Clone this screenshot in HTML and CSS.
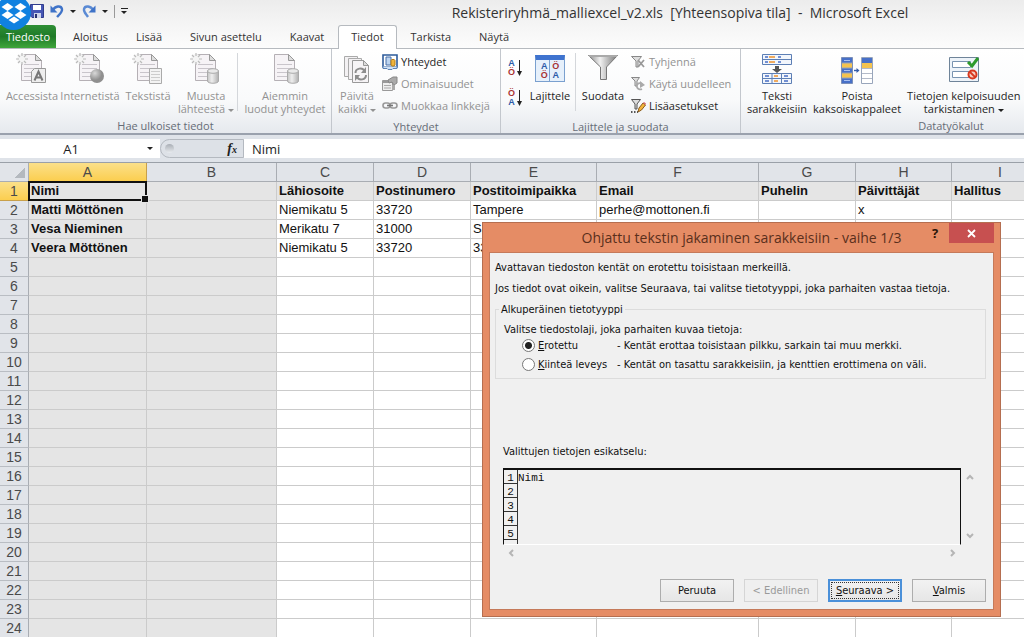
FILE: index.html
```html
<!DOCTYPE html>
<html lang="fi">
<head>
<meta charset="utf-8">
<title>Rekisteriryhmä_malliexcel_v2.xls - Microsoft Excel</title>
<link rel="stylesheet" href="styles.css">
</head>
<body>
<svg class="defs" aria-hidden="true">
  <defs>
    <linearGradient id="metal" x1="0" x2="1"><stop offset="0" stop-color="#8b8b8b"/><stop offset=".4" stop-color="#f0f0f0"/><stop offset="1" stop-color="#777"/></linearGradient>
    <linearGradient id="drum" x1="0" x2="1"><stop offset="0" stop-color="#c4c4c4"/><stop offset=".4" stop-color="#eee"/><stop offset="1" stop-color="#b0b0b0"/></linearGradient>
    <radialGradient id="ball" cx=".35" cy=".3"><stop offset="0" stop-color="#d8d8d8"/><stop offset="1" stop-color="#8f8f8f"/></radialGradient>
  </defs>
  <symbol id="doc" viewBox="0 0 32 32">
    <path d="M5.500 1.500h14l6 6v20h-20z" fill="#f6f3f6" stroke="#b5b0b5"/>
    <path d="M19.500 1.500v6h6z" fill="#ddd" stroke="#999"/>
    <path d="M8 11.500h15M8 15.500h15M8 19.500h15M8 23.500h15" stroke="#c9c5cb"/>
  </symbol>
  <symbol id="spark" viewBox="0 0 32 32">
    <circle cx="6" cy="6" r="5" fill="#f4f4f4"/>
    <path d="M6 0v3M6 9v3M0 6h3M9 6h3M2 2l2 2M8 8l2 2M10 2L8 4M4 8l-2 2" stroke="#bbb" stroke-width="1.200"/>
  </symbol>
  <symbol id="cylinder" viewBox="0 0 12 16">
    <path d="M.5 3v10c0 3 11 3 11 0V3z" fill="url(#drum)" stroke="#aaa"/>
    <ellipse cx="6" cy="3" rx="5.500" ry="2.300" fill="#e9e9e9" stroke="#aaa"/>
  </symbol>
  <symbol id="funnel" viewBox="0 0 32 32">
    <path d="M1.500 2.500h29L19.500 14v12.500h-6V14z" fill="url(#metal)" stroke="#777"/>
    <path d="M2 3h28" stroke="#aaa" stroke-width="2"/>
  </symbol>
</svg>

<div class="window">
  <header class="titlebar">
    <div class="quick">
      <button class="tool" aria-label="Tallenna"><svg width="14" height="14" viewBox="0 0 14 14"><path d="M.5.5h13v13H2L.5 12z" fill="#4656b4" stroke="#313c8c"/><path d="M3 1h8v5H3z" fill="#fff"/><path d="M4 9h7v5H4z" fill="#cfd5ea"/><path d="M5 10h2v4H5z" fill="#27306f"/></svg></button>
      <button class="tool" aria-label="Kumoa"><svg width="14" height="14" viewBox="0 0 14 14"><path d="M3 6c2-4 8-5 9-1 .6 3-2 5-5 8" fill="none" stroke="#3f73c8" stroke-width="2.400"/><path d="M.5 1.500v7h7z" fill="#3f73c8"/></svg></button>
      <span class="drop"></span>
      <button class="tool" aria-label="Tee uudelleen"><svg width="14" height="14" viewBox="0 0 14 14"><path d="M11 6c-2-4-8-5-9-1-.6 3 2 5 4 8" fill="none" stroke="#5a8ad4" stroke-width="2.400"/><path d="M13.500 1.500v7h-7z" fill="#3f73c8"/></svg></button>
      <span class="drop"></span>
      <span class="rule"></span>
      <span class="more"></span>
    </div>
    <h1 class="caption">Rekisteriryhmä_malliexcel_v2.xls &nbsp;[Yhteensopiva tila] &nbsp;- &nbsp;Microsoft Excel</h1>
  </header>
  <div class="dropbox"><svg width="26" height="22" viewBox="0 0 26 22"><path d="M6.500 1l6 4-6 4-6-4zM19.500 1l6 4-6 4-6-4zM6.500 9l6 4-6 4-6-4zM19.500 9l6 4-6 4-6-4zM13 14.500l5.500 3.500-5.500 3.500L7.500 18z" fill="#fff"/></svg></div>

  <nav class="tabs">
    <button class="tab file">Tiedosto</button>
    <button class="tab">Aloitus</button>
    <button class="tab">Lisää</button>
    <button class="tab">Sivun asettelu</button>
    <button class="tab">Kaavat</button>
    <button class="tab active">Tiedot</button>
    <button class="tab">Tarkista</button>
    <button class="tab">Näytä</button>
  </nav>

  <section class="ribbon">
    <div class="group import">
      <div class="tools">
        <button class="big off"><svg width="32" height="32"><use href="#doc"/><use href="#spark"/><path d="M15.500 18.500l3-3h11v14h-14z" fill="#eee" stroke="#999"/><path d="M18.500 27.500l4-9 4 9M20 24.500h5" fill="none" stroke="#777" stroke-width="2"/></svg><span>Accessista</span></button>
        <button class="big off"><svg width="32" height="32"><use href="#doc"/><use href="#spark"/><circle cx="23" cy="23" r="7" fill="url(#ball)"/></svg><span>Internetistä</span></button>
        <button class="big off"><svg width="32" height="32"><use href="#doc"/><use href="#spark"/><path d="M17.500 15.500h12v15h-12z" fill="#f3f3f3" stroke="#aaa"/><path d="M19 18.500h9M19 21.500h9M19 24.500h9M19 27.500h9" stroke="#ccc"/></svg><span>Tekstistä</span></button>
        <button class="big off"><svg width="32" height="32"><use href="#doc"/><use href="#spark"/><use href="#cylinder" x="17" y="15" width="12" height="16"/></svg><span>Muusta<br>lähteestä <i class="caret"></i></span></button>
        <span class="divider"></span>
        <button class="big off"><svg width="32" height="32"><use href="#doc"/><use href="#cylinder" x="18" y="15" width="12" height="16"/></svg><span>Aiemmin<br>luodut yhteydet</span></button>
      </div>
      <h2 class="name">Hae ulkoiset tiedot</h2>
    </div>

    <div class="group links">
      <div class="tools">
        <button class="big off"><svg width="32" height="32"><path d="M3.500 3.500h13v20h-13z" fill="#f3f1f3" stroke="#aaa"/><path d="M7.500 5.500h13v21h-13z" fill="#f3f1f3" stroke="#aaa"/><path d="M11.500 7.500h11l5 5v17h-16z" fill="#f6f4f6" stroke="#999"/><path d="M22.500 7.500v5h5z" fill="#ddd" stroke="#999"/><path d="M14.500 20c0-5 7-6 9-2M25 22c0 5-7 6-9 2" fill="none" stroke="#8d8d8d" stroke-width="2"/><path d="M25 14v6h-5zM14 28v-6h5z" fill="#8d8d8d"/></svg><span>Päivitä<br>kaikki <i class="caret"></i></span></button>
        <div class="stack">
          <button class="small"><svg width="16" height="16" viewBox="0 0 16 16"><path d="M1 1h14v12H1z" fill="#fff" stroke="#2d5b9a" stroke-width="1.600"/><path d="M1 12.500v2h4l1 1h4l1-1h4v-2" fill="#cfe1f5" stroke="#5d83b5"/><path d="M4 3h5v8H4z" fill="#bcd4f0" stroke="#466fa8"/><path d="M9 6.500c0-1.500 4-1.500 4 0V11c0 1.500-4 1.500-4 0z" fill="#f0b53c" stroke="#b47a14"/></svg>Yhteydet</button>
          <button class="small off"><svg width="16" height="16" viewBox="0 0 16 16"><path d="M.5 4.500h10v10H.5z" fill="#eee" stroke="#999"/><path d="M1 5h9v2H1z" fill="#999"/><path d="M2 9.500h7M2 12h7" stroke="#aaa"/><path d="M6 4l5-3h4v6l-3 2-2-3-3 1z" fill="#aaa" stroke="#888"/><path d="M10 9h3v5h-3z" fill="#aaa"/></svg>Ominaisuudet</button>
          <button class="small off"><svg width="16" height="16" viewBox="0 0 16 16"><rect x="1" y="5" width="7" height="5" rx="2.500" fill="none" stroke="#999" stroke-width="1.600"/><rect x="8" y="5" width="7" height="5" rx="2.500" fill="none" stroke="#999" stroke-width="1.600"/><path d="M5 7.500h6" stroke="#777" stroke-width="1.600"/></svg>Muokkaa linkkejä</button>
        </div>
      </div>
      <h2 class="name">Yhteydet</h2>
    </div>

    <div class="group sort">
      <div class="tools">
        <div class="orders">
          <button class="order" aria-label="Lajittele A–Ö"><span class="pair"><b class="blue">A</b><b class="red">Ö</b></span><svg width="5" height="16" viewBox="0 0 5 16"><path d="M2.500 0v13" stroke="#222"/><path d="M0 11h5l-2.500 5z" fill="#222"/></svg></button>
          <button class="order" aria-label="Lajittele Ö–A"><span class="pair"><b class="red">Ö</b><b class="blue">A</b></span><svg width="5" height="16" viewBox="0 0 5 16"><path d="M2.500 0v13" stroke="#222"/><path d="M0 11h5l-2.500 5z" fill="#222"/></svg></button>
        </div>
        <button class="big"><span class="sorticon"><span class="pair"><b class="blue">A</b><b class="red">Ö</b></span><span class="pair"><b class="red">Ö</b><b class="blue">A</b></span></span><span>Lajittele</span></button>
        <span class="divider"></span>
        <button class="big"><svg width="32" height="32"><use href="#funnel"/></svg><span>Suodata</span></button>
        <div class="stack">
          <button class="small off"><svg width="16" height="16" viewBox="0 0 16 16"><path d="M1.500 2.500h10L8 7v6H6V7z" fill="#ddd" stroke="#888"/><path d="M8 6l6 7M14 6l-6 7" stroke="#999" stroke-width="1.800"/></svg>Tyhjennä</button>
          <button class="small off"><svg width="16" height="16" viewBox="0 0 16 16"><path d="M1.500 1.500h8L7 5v5H5V5z" fill="#ddd" stroke="#888"/><path d="M12 8c-3-2-6 0-5 3 .5 2 3 3 5 2" fill="none" stroke="#aaa" stroke-width="1.800"/><path d="M10 5l5 4-5 3z" fill="#aaa"/></svg>Käytä uudelleen</button>
          <button class="small"><svg width="16" height="16" viewBox="0 0 16 16"><path d="M1.500 1.500h9L7 6v5H5V6z" fill="#ddd" stroke="#555"/><path d="M1 14h7" stroke="#222" stroke-width="1.600" stroke-dasharray="1.500 1.500"/><path d="M8 14l1-4 4-5 2.500 2-4 5z" fill="#f2b43a" stroke="#8a5a1c"/><path d="M13 5l1-1 2 1.500-.8 1.500z" fill="#d96d6d"/></svg>Lisäasetukset</button>
        </div>
      </div>
      <h2 class="name">Lajittele ja suodata</h2>
    </div>

    <div class="group data">
      <div class="tools">
        <button class="big"><svg width="32" height="32"><path d="M1.500 1.500h29v10h-29z" fill="#f2f6fc" stroke="#5d7fb5"/><path d="M2 6.500h28" stroke="#5d7fb5"/><path d="M4 4h3M17 4h3M4 9h3M17 9h3" stroke="#4a6fc4" stroke-width="1.600"/><path d="M8 4h6M8 9h6" stroke="#f0932b" stroke-width="1.600"/><path d="M14 13h4v3h3l-5 4-5-4h3z" fill="#555"/><path d="M1.500 20.500h29v10h-29z" fill="#f2f6fc" stroke="#5d7fb5"/><path d="M2 25.500h28M11 20.500v10M20.500 20.500v10" stroke="#5d7fb5"/><path d="M4 23h4M23 23h4M4 28h4M23 28h4" stroke="#4a6fc4" stroke-width="1.600"/><path d="M13 23h4M13 28h4" stroke="#f0932b" stroke-width="1.600"/></svg><span>Teksti<br>sarakkeisiin</span></button>
        <button class="big"><svg width="34" height="32" viewBox="0 0 34 32"><path d="M1.500 4.500h11v26h-11z" fill="#4770c8" stroke="#7b8fb8"/><path d="M2 10h10v5H2zM2 20h10v5H2z" fill="#f4c34f"/><path d="M4 7.500h6M4 17.500h6M4 27.500h6" stroke="#a9c1f2"/><path d="M2 10h10M2 15h10M2 20h10M2 25h10" stroke="#97a3ba"/><path d="M14 17.500h3" stroke="#345ba8" stroke-width="1.400"/><path d="M16.500 15l3 2.500-3 2.500z" fill="#345ba8"/><path d="M21.500 4.500h11v26h-11z" fill="#fff" stroke="#98a5bb"/><path d="M22 5h10v5H22z" fill="#4770c8"/><path d="M22 10h10v5H22z" fill="#f4c34f"/><path d="M22 15.500h10M22 20.500h10M22 25.500h10" stroke="#b3bac8"/></svg><span>Poista<br>kaksoiskappaleet</span></button>
        <button class="big"><svg width="32" height="32"><path d="M1.500 4.500h29v24h-29z" fill="#edf3f9" stroke="#6f8499"/><path d="M4.500 8.500h18v6h-18zM4.500 18.500h18v6h-18z" fill="#fff" stroke="#7893b0"/><path d="M20 9l4 4 6-8" fill="none" stroke="#2d9a2d" stroke-width="3"/><circle cx="24.500" cy="21.500" r="4" fill="#f6cfc4" stroke="#d8381e" stroke-width="2"/><path d="M21.500 18.500l6 6" stroke="#d8381e" stroke-width="1.800"/></svg><span>Tietojen kelpoisuuden<br>tarkistaminen <i class="caret"></i></span></button>
      </div>
      <h2 class="name">Datatyökalut</h2>
    </div>
  </section>

  <div class="formula">
    <div class="namebox"><input aria-label="Nimiruutu" value="A1"><span class="drop"></span></div>
    <div class="fxarea"><span class="knob"></span><button class="fx" aria-label="Lisää funktio">f<sub>x</sub></button></div>
    <input class="entry" aria-label="Kaavarivi" value="Nimi">
  </div>

  <main class="sheet">
    <table class="grid">
      <colgroup><col class="c0"><col class="c118"><col class="c130"><col class="c97"><col class="c97"><col class="c126"><col class="c162"><col class="c97"><col class="c96"><col></colgroup>
      <thead><tr><th class="corner"></th><th class="on">A</th><th>B</th><th>C</th><th>D</th><th>E</th><th>F</th><th>G</th><th>H</th><th>I</th></tr></thead>
      <tbody id="rows">
        <tr class="heading"><th class="on">1</th><td class="cursor">Nimi</td><td></td><td>Lähiosoite</td><td>Postinumero</td><td>Postitoimipaikka</td><td>Email</td><td>Puhelin</td><td>Päivittäjät</td><td>Hallitus</td></tr>
        <tr><th>2</th><td>Matti Möttönen</td><td></td><td>Niemikatu 5</td><td>33720</td><td>Tampere</td><td>perhe@mottonen.fi</td><td></td><td>x</td><td></td></tr>
        <tr><th>3</th><td>Vesa Nieminen</td><td></td><td>Merikatu 7</td><td>31000</td><td>Sa</td><td></td><td></td><td></td><td></td></tr>
        <tr><th>4</th><td>Veera Möttönen</td><td></td><td>Niemikatu 5</td><td>33720</td><td>33</td><td></td><td></td><td></td><td></td></tr>
      </tbody>
    </table>
  </main>
</div>

<div class="dialog" role="dialog" aria-labelledby="dlg">
  <div class="bar">
    <h2 id="dlg">Ohjattu tekstin jakaminen sarakkeisiin - vaihe 1/3</h2>
    <div class="controls">
      <button class="help" aria-label="Ohje">?</button>
      <button class="close" aria-label="Sulje"><svg width="9" height="9" viewBox="0 0 9 9"><path d="M1 1l7 7M8 1L1 8" stroke="#fff" stroke-width="1.800"/></svg></button>
    </div>
  </div>
  <form class="body">
    <p>Avattavan tiedoston kentät on erotettu toisistaan merkeillä.</p>
    <p>Jos tiedot ovat oikein, valitse Seuraava, tai valitse tietotyyppi, joka parhaiten vastaa tietoja.</p>
    <fieldset>
      <legend>Alkuperäinen tietotyyppi</legend>
      <div class="ask">Valitse tiedostolaji, joka parhaiten kuvaa tietoja:</div>
      <div class="option"><label><input type="radio" name="kind" checked><span><u>E</u>rotettu</span></label><span>- Kentät erottaa toisistaan pilkku, sarkain tai muu merkki.</span></div>
      <div class="option"><label><input type="radio" name="kind"><span><u>K</u>iinteä leveys</span></label><span>- Kentät on tasattu sarakkeisiin, ja kenttien erottimena on väli.</span></div>
    </fieldset>
    <div class="previewname">Valittujen tietojen esikatselu:</div>
    <div class="preview">
      <div class="pane">
        <div class="line"><span class="num">1</span><span>Nimi</span></div>
        <div class="line"><span class="num">2</span></div>
        <div class="line"><span class="num">3</span></div>
        <div class="line"><span class="num">4</span></div>
        <div class="line"><span class="num">5</span></div>
        <div class="line"><span class="num"></span></div>
      </div>
      <div class="vscroll">
        <svg width="8" height="6" viewBox="0 0 8 6"><path d="M1 5l3-3 3 3" fill="none" stroke="#b5b5b5" stroke-width="2"/></svg>
        <svg width="8" height="6" viewBox="0 0 8 6"><path d="M1 1l3 3 3-3" fill="none" stroke="#b5b5b5" stroke-width="2"/></svg>
      </div>
      <div class="hscroll">
        <svg width="6" height="8" viewBox="0 0 6 8"><path d="M5 1L2 4l3 3" fill="none" stroke="#b5b5b5" stroke-width="2"/></svg>
        <svg width="6" height="8" viewBox="0 0 6 8"><path d="M1 1l3 3-3 3" fill="none" stroke="#b5b5b5" stroke-width="2"/></svg>
      </div>
    </div>
    <div class="actions">
      <button type="button">Peruuta</button>
      <button type="button" disabled>&lt; Edellinen</button>
      <button type="button" class="primary"><span><u>S</u>euraava &gt;</span></button>
      <button type="button"><span><u>V</u>almis</span></button>
    </div>
  </form>
</div>
<script src="sheet.js"></script>
</body>
</html>
```
FILE: sheet.js
```js
// Fills the sheet with empty numbered rows below the data.
const rows = document.getElementById("rows");
for (let n = rows.children.length + 1; n <= 24; n++) {
  const tr = document.createElement("tr");
  const th = document.createElement("th");
  th.textContent = n;
  tr.append(th);
  for (let c = 0; c < 9; c++) tr.append(document.createElement("td"));
  rows.append(tr);
}
```
FILE: styles.css
```css
* { box-sizing: border-box; }
html, body { height: 100%; }
body {
  margin: 0;
  overflow: hidden;
  background: #fff;
  color: #1e1e1e;
  font: 11px/12px "Open Sans", "Noto Sans", sans-serif;
}
button, input { font: inherit; color: inherit; }
button { border: 0; padding: 0; background: none; }
h1, h2, p { margin: 0; font-weight: normal; }
.defs { position: absolute; width: 0; height: 0; }
.window { display: flex; flex-direction: column; height: 100%; overflow: hidden; }

/* Title bar */
.titlebar { display: flex; align-items: center; flex: none; height: 25px; background: linear-gradient(#ececec, #f5f5f5); }
.quick { display: flex; align-items: center; gap: 6px; width: 336px; padding: 0 0 3px 30px; flex: none; }
.tool { display: flex; }
.drop { border: 3px solid transparent; border-top-color: #222; border-bottom: 0; }
.rule { width: 1px; height: 13px; background: #999; }
.more { width: 7px; height: 7px; border-top: 1px solid #222; position: relative; }
.more::after { content: ""; position: absolute; top: 2px; left: 0; border: 3px solid transparent; border-top-color: #222; border-bottom: 0; }
.caption { flex: 1; text-align: center; font-size: 14px; line-height: 24px; color: #333; white-space: nowrap; }
.dropbox {
  position: absolute; left: -4px; top: -5px; width: 35px; height: 35px;
  border-radius: 50%; background: #1081e0;
  display: flex; align-items: center; justify-content: center; z-index: 1;
}

/* Ribbon tabs */
.tabs { display: flex; flex: none; height: 24px; background: linear-gradient(#f5f5f5, #fcfcfc); border-bottom: 1px solid #b6babf; }
.tab { height: 23px; padding: 0 14px; color: #333; white-space: nowrap; }
.tab.file { width: 56px; padding: 0; margin-right: 3px; color: #fff; background: linear-gradient(#2f8f35, #1f7a28 50%, #3fa63b); border-radius: 0 4px 0 0; }
.tab.active { height: 24px; padding: 0 12px 2px; background: #fff; border: 1px solid #b6babf; border-bottom: 0; border-radius: 3px 3px 0 0; }

/* Ribbon */
.ribbon { display: flex; flex: none; height: 86px; overflow: hidden; background: linear-gradient(#fff, #f9fafb 60%, #e6e9ee); border-bottom: 2px solid #9aa1ad; }
.group { display: flex; flex-direction: column; flex: none; border-right: 1px solid #c3c7cd; }
.import { width: 332px; }
.links { width: 169px; }
.sort { width: 240px; }
.data { width: 421px; }
.tools { display: flex; flex: 1; padding-top: 4px; }
.name { text-align: center; font-size: 11px; line-height: 15px; color: #666c76; }
.big { display: flex; flex-direction: column; align-items: center; gap: 4px; line-height: 13px; white-space: nowrap; justify-content: flex-start; flex: none; }
.off { color: #929292; }
.caret { display: inline-block; vertical-align: middle; border: 3px solid transparent; border-top-color: currentColor; border-bottom: 0; }
.divider { width: 1px; height: 58px; background: #d4d7db; flex: none; }
.import .big { width: 58px; }
.import .tools { padding-left: 3px; }
.import .divider { margin-left: 2px; }
.import .divider + .big { width: 94px; }
.links .big { width: 50px; }
.stack { display: flex; flex-direction: column; }
.small { display: flex; align-items: center; gap: 3px; height: 22px; padding-bottom: 4px; white-space: nowrap; }
.orders { display: flex; flex-direction: column; gap: 12px; padding: 6px 0 0 7px; width: 26px; }
.order { display: flex; gap: 2px; align-items: center; }
.pair { display: flex; flex-direction: column; font: bold 9px/9px "Liberation Sans", sans-serif; text-align: center; }
.blue { color: #2c5aa8; }
.red { color: #a83232; }
.sort .big { width: 46px; }
.sort .divider + .big { width: 54px; }
.sort .divider { margin-left: 2px; }
.sorticon { display: flex; justify-content: space-evenly; align-items: center; width: 30px; height: 27px; margin: 2px 0 3px; border: 1px solid #7aa0cf; border-top: 5px solid #3f73cf; background: linear-gradient(90deg, transparent 13px, #7aa0cf 13px, #7aa0cf 14px, transparent 14px), #e6f0fb; }
.data .tools { padding-left: 6px; gap: 6px; }

/* Formula bar */
.formula { display: flex; flex: none; height: 28px; padding: 4px 0 4px; background: #dfe3e9; border-bottom: 1px solid #9aa0a8; }
.namebox { display: flex; align-items: center; width: 160px; padding-right: 7px; background: #fff; flex: none; }
.namebox input { flex: 1; min-width: 0; border: 0; background: none; text-align: center; font-size: 13px; padding: 0 5px 0 0; outline: 0; }
.fxarea { display: flex; align-items: center; justify-content: space-between; width: 84px; padding: 0 6px 0 4px; border: 1px solid #b4b9c0; border-radius: 10px 0 0 10px; background: #dde1e7; flex: none; }
.knob { width: 9px; height: 9px; border-radius: 50%; background: linear-gradient(#a9aeb5, #e8ebef); }
.fx { font: italic bold 14px/16px "Liberation Serif", serif; }
.fx sub { font-size: 10px; line-height: 1px; vertical-align: baseline; }
.entry { flex: 1; min-width: 0; border: 0; padding: 0 8px; font-size: 13px; outline: 0; background: #fff; }

/* Sheet */
.sheet { flex: 1; min-height: 0; overflow: hidden; font: 13px/15px "Liberation Sans", Arial, sans-serif; }
.grid { width: 100%; min-width: 1049px; table-layout: fixed; border-collapse: separate; border-spacing: 0; }
.c0 { width: 29px; }
.c118 { width: 118px; }
.c130 { width: 130px; }
.c97 { width: 97px; }
.c96 { width: 96px; }
.c126 { width: 126px; }
.c162 { width: 162px; }
.grid th, .grid td { height: 19px; padding: 0 2px 2px; border-right: 1px solid #cbcbcb; border-bottom: 1px solid #cbcbcb; white-space: nowrap; overflow: hidden; color: #111; }
.grid td { text-align: left; }
.grid th { padding: 1px 0 0; font-weight: normal; font-size: 14px; color: #4a4a4a; background: #e1e4e9; border-color: #a9adb3; }
.grid tbody th { border-bottom-color: #b9bdc3; }
.grid th.on { background: linear-gradient(#fbe08a, #fbce4f); border-color: #c8a04a; }
.grid .corner { background: linear-gradient(135deg, #e1e4e9 50%, #b4b9bf 50%) 15px 5px / 10px 10px no-repeat #e1e4e9; }
.grid td:nth-child(2), .grid td:nth-child(3), .heading td { background: #e5e5e5; }
.grid td:nth-child(2), .heading td { font-weight: bold; }
.grid td.cursor { position: relative; overflow: visible; }
.cursor::before { content: ""; position: absolute; inset: -1px -1px -1px -1px; border: 2px solid #111; }
.cursor::after { content: ""; position: absolute; right: -3px; bottom: -3px; width: 6px; height: 6px; background: #111; border: 1px solid #e5e5e5; }

/* Wizard dialog */
.dialog {
  position: absolute; left: 482px; top: 222px; width: 519px;
  padding: 0 6px 6px; background: #e58c65; border: 1px solid #b56e50;
  z-index: 2; color: #111;
}
.bar { display: flex; height: 29px; position: relative; }
.bar h2 { flex: 1; text-align: center; font-size: 14px; line-height: 30px; color: #5a2f1c; }
.controls { position: absolute; right: 0; top: 0; display: flex; }
.help { width: 28px; font: bold 13px/20px "Open Sans", sans-serif; color: #2a1408; }
.close { display: flex; align-items: center; justify-content: center; width: 45px; height: 20px; background: #c75050; }
.body { display: flex; flex-direction: column; padding: 8px 7px 7px 5px; background: #f0f0f0; border: 1px solid #c57a5a; font: 11px/13px "DejaVu Sans Condensed", "DejaVu Sans", sans-serif; }
.body p { height: 21px; white-space: nowrap; }
fieldset { height: 76px; margin: 0; padding: 7px 0 0 8px; border: 1px solid #dcdcdc; min-width: 0; }
legend { padding: 0 2px; margin-left: -5px; }
.ask { white-space: nowrap; }
.option { display: flex; align-items: center; height: 19px; white-space: nowrap; }
.option label { display: flex; align-items: center; width: 113px; padding-left: 18px; gap: 3px; }
.option input { appearance: none; width: 13px; height: 13px; margin: 0; border: 1px solid #777; border-radius: 50%; background: #fff; flex: none; }
.option input:checked { background: radial-gradient(circle, #222 3px, #fff 4px); }
.previewname { margin: 66px 0 0 8px; }
.preview { display: grid; grid-template-columns: 1fr 18px; grid-template-rows: 77px 15px; margin: 10px 7px 0 8px; }
.pane { overflow: hidden; border: solid #111; border-width: 2px 1px 0 1px; border-bottom: 1px solid #fff; font: 11px/13px "Liberation Mono", monospace; }
.line { display: flex; height: 14px; line-height: 17px; }
.num { width: 14px; border-right: 1px solid #333; border-bottom: 1px solid #333; text-align: center; flex: none; }
.vscroll { display: flex; flex-direction: column; justify-content: space-between; align-items: center; padding: 6px 0; }
.hscroll { display: flex; justify-content: space-between; align-items: center; padding: 0 5px; }
.actions { display: flex; justify-content: flex-end; gap: 10px; margin-top: 19px; }
.actions button { width: 74px; height: 23px; border: 1px solid #adadad; background: linear-gradient(#f2f2f2, #e6e6e6); }
.actions button:disabled { color: #9a9a9a; border-color: #d5d5d5; background: #efefef; }
.actions .primary { border: 2px solid #4a90d9; padding: 1px; }
.primary span { display: block; border: 1px dotted #333; line-height: 15px; }
```
